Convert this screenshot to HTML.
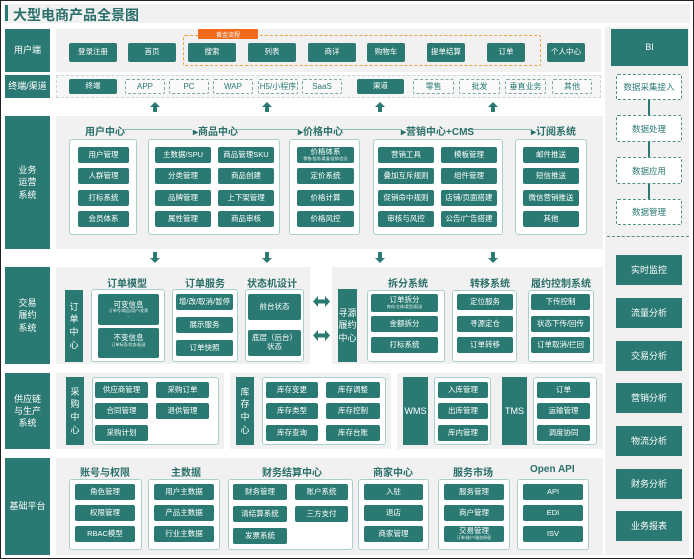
<!DOCTYPE html><html><head><meta charset="utf-8"><style>
*{margin:0;padding:0;box-sizing:border-box}
body{width:694px;height:560px;background:#fff;position:relative;overflow:hidden;font-family:"Liberation Sans","Noto Sans CJK SC",sans-serif}
div{position:absolute}
.frame{left:0;top:0;width:694px;height:559px;border:1.5px solid #222}
.g{background:#f1f1f1}
.b{background:#2a7a73;color:#fff;font-size:7.5px;display:flex;align-items:center;justify-content:center;text-align:center;border-radius:2px;line-height:1.15;flex-direction:column}
.d{border:1px dashed #7fa9a5;color:#2a7a73;font-size:8px;display:flex;align-items:center;justify-content:center;border-radius:2px;background:#fafafa}
.w{background:#fff;border:1px solid #a9d0cb;border-radius:3px}
.h{color:#2a6f69;font-size:10px;font-weight:bold;white-space:nowrap}
.L{background:#2a7a73;color:#fff;font-size:9px;display:flex;align-items:center;justify-content:center;text-align:center;line-height:1.35}
.v{background:#2a7a73;color:#fff;font-size:9px;display:flex;align-items:center;justify-content:center;text-align:center;line-height:1.4}
.s{font-size:4px;opacity:.9}
.au{width:0;height:0;border-left:5px solid transparent;border-right:5px solid transparent;border-bottom:5px solid #2a7a73}
.st{background:#2a7a73;width:4px}
.ln{height:1px;background:#8fbcb7}
.rd{border:1.2px dashed #4f8f89;background:#fff;color:#2a7a73;font-size:8.5px;display:flex;align-items:center;justify-content:center;border-radius:2px}
</style></head><body>
<div class="frame"></div>
<div class="g" style="left:4px;top:4px;width:686px;height:19px"></div>
<div style="left:5px;top:5px;width:3px;height:16px;background:#2a7a73"></div>
<div style="left:13px;top:5px;font-size:14px;font-weight:bold;color:#2a6f69">大型电商产品全景图</div>

<div class="L" style="left:5px;top:29px;width:45px;height:43px">用户端</div>
<div class="L" style="left:5px;top:75px;width:45px;height:23px">终端/渠道</div>
<div class="L" style="left:5px;top:116px;width:45px;height:133px">业务<br>运营<br>系统</div>
<div class="L" style="left:5px;top:267px;width:45px;height:97px">交易<br>履约<br>系统</div>
<div class="L" style="left:5px;top:373px;width:45px;height:76px">供应链<br>与生产<br>系统</div>
<div class="L" style="left:5px;top:458px;width:45px;height:97px">基础平台</div>

<div class="g" style="left:605px;top:27px;width:84px;height:528px"></div>
<div class="L" style="left:611px;top:29px;width:77px;height:37px">BI</div>
<div class="rd" style="left:616px;top:74px;width:66px;height:26px">数据采集接入</div>
<div class="rd" style="left:616px;top:115px;width:66px;height:27px">数据处理</div>
<div class="rd" style="left:616px;top:157px;width:66px;height:27px">数据应用</div>
<div class="rd" style="left:616px;top:199px;width:66px;height:26px">数据管理</div>
<div style="left:648px;top:100px;width:1.5px;height:15px;background:#2a7a73"></div>
<div style="left:648px;top:142px;width:1.5px;height:15px;background:#2a7a73"></div>
<div style="left:648px;top:184px;width:1.5px;height:15px;background:#2a7a73"></div>
<div style="left:607px;top:236px;width:82px;border-top:1px dashed #4f8f89"></div>
<div class="L" style="left:616px;top:255px;width:66px;height:30px">实时监控</div>
<div class="L" style="left:616px;top:298px;width:66px;height:30px">流量分析</div>
<div class="L" style="left:616px;top:341px;width:66px;height:30px">交易分析</div>
<div class="L" style="left:616px;top:383px;width:66px;height:30px">营销分析</div>
<div class="L" style="left:616px;top:426px;width:66px;height:30px">物流分析</div>
<div class="L" style="left:616px;top:469px;width:66px;height:30px">财务分析</div>
<div class="L" style="left:616px;top:511px;width:66px;height:30px">业务报表</div>

<div class="g" style="left:56px;top:29px;width:545px;height:43px"></div>
<div style="left:183px;top:35px;width:358px;height:31px;border:1px dashed #f0a24a;border-radius:2px"></div>
<div style="left:198px;top:29px;width:60px;height:10px;background:#f26b1d;color:#fff;font-size:6px;display:flex;align-items:center;justify-content:center;border-radius:1px">黄金流程</div>
<div class="b" style="left:69px;top:43px;width:48px;height:19px">登录注册</div>
<div class="b" style="left:128px;top:43px;width:48px;height:19px">首页</div>
<div class="b" style="left:188px;top:43px;width:48px;height:19px">搜索</div>
<div class="b" style="left:248px;top:43px;width:48px;height:19px">列表</div>
<div class="b" style="left:308px;top:43px;width:48px;height:19px">商详</div>
<div class="b" style="left:367px;top:43px;width:38px;height:19px">购物车</div>
<div class="b" style="left:427px;top:43px;width:38px;height:19px">提单结算</div>
<div class="b" style="left:487px;top:43px;width:38px;height:19px">订单</div>
<div class="b" style="left:547px;top:43px;width:38px;height:19px">个人中心</div>

<div style="left:56px;top:75px;width:545px;height:23px;border:1px dashed #c9d9d7;background:#f6f6f6"></div>
<div class="b" style="left:69px;top:79px;width:48px;height:15px">终端</div>
<div class="d" style="left:125px;top:79px;width:40px;height:15px">APP</div>
<div class="d" style="left:169px;top:79px;width:40px;height:15px">PC</div>
<div class="d" style="left:213px;top:79px;width:40px;height:15px">WAP</div>
<div class="d" style="left:258px;top:79px;width:40px;height:15px">H5/小程序</div>
<div class="d" style="left:302px;top:79px;width:40px;height:15px">SaaS</div>
<div class="b" style="left:357px;top:79px;width:47px;height:15px">渠道</div>
<div class="d" style="left:413px;top:79px;width:41px;height:15px">零售</div>
<div class="d" style="left:459px;top:79px;width:41px;height:15px">批发</div>
<div class="d" style="left:505px;top:79px;width:41px;height:15px">垂直业务</div>
<div class="d" style="left:552px;top:79px;width:40px;height:15px">其他</div>
<div class="au" style="left:150px;top:102px"></div><div class="st" style="left:153px;top:107px;height:5px"></div>
<div class="au" style="left:262px;top:102px"></div><div class="st" style="left:265px;top:107px;height:5px"></div>
<div class="au" style="left:375px;top:102px"></div><div class="st" style="left:378px;top:107px;height:5px"></div>
<div class="au" style="left:488px;top:102px"></div><div class="st" style="left:491px;top:107px;height:5px"></div>

<div class="g" style="left:56px;top:116px;width:547px;height:133px"></div>
<div class="ln" style="left:122px;top:129px;width:70px"></div>
<div class="ln" style="left:231px;top:129px;width:68px"></div>
<div class="ln" style="left:338px;top:129px;width:64px"></div>
<div class="ln" style="left:467px;top:129px;width:65px"></div>
<div class="h" style="left:85px;top:123px">用户中心</div>
<div class="h" style="left:193px;top:123px">▸商品中心</div>
<div class="h" style="left:298px;top:123px">▸价格中心</div>
<div class="h" style="left:401px;top:123px">▸营销中心+CMS</div>
<div class="h" style="left:531px;top:123px">▸订阅系统</div>
<div class="w" style="left:69px;top:139px;width:68px;height:96px"></div>
<div class="b" style="left:78px;top:147px;width:51px;height:16px">用户管理</div>
<div class="b" style="left:78px;top:168px;width:51px;height:16px">人群管理</div>
<div class="b" style="left:78px;top:190px;width:51px;height:16px">打标系统</div>
<div class="b" style="left:78px;top:211px;width:51px;height:16px">会员体系</div>
<div class="w" style="left:148px;top:139px;width:132px;height:96px"></div>
<div class="b" style="left:155px;top:147px;width:56px;height:16px">主数据/SPU</div>
<div class="b" style="left:218px;top:147px;width:56px;height:16px">商品管理SKU</div>
<div class="b" style="left:155px;top:168px;width:56px;height:16px">分类管理</div>
<div class="b" style="left:218px;top:168px;width:56px;height:16px">商品创建</div>
<div class="b" style="left:155px;top:190px;width:56px;height:16px">品牌管理</div>
<div class="b" style="left:218px;top:190px;width:56px;height:16px">上下架管理</div>
<div class="b" style="left:155px;top:211px;width:56px;height:16px">属性管理</div>
<div class="b" style="left:218px;top:211px;width:56px;height:16px">商品审核</div>
<div class="w" style="left:289px;top:139px;width:71px;height:96px"></div>
<div class="b" style="left:297px;top:147px;width:57px;height:16px">价格体系<span class="s">零售/批发/渠道/促销/会员</span></div>
<div class="b" style="left:297px;top:168px;width:57px;height:16px">定价系统</div>
<div class="b" style="left:297px;top:190px;width:57px;height:16px">价格计算</div>
<div class="b" style="left:297px;top:211px;width:57px;height:16px">价格风控</div>
<div class="w" style="left:373px;top:139px;width:130px;height:96px"></div>
<div class="b" style="left:378px;top:147px;width:56px;height:16px">营销工具</div>
<div class="b" style="left:441px;top:147px;width:56px;height:16px">模板管理</div>
<div class="b" style="left:378px;top:168px;width:56px;height:16px">叠加互斥规则</div>
<div class="b" style="left:441px;top:168px;width:56px;height:16px">组件管理</div>
<div class="b" style="left:378px;top:190px;width:56px;height:16px">促销命中规则</div>
<div class="b" style="left:441px;top:190px;width:56px;height:16px">店铺/页面搭建</div>
<div class="b" style="left:378px;top:211px;width:56px;height:16px">审核与风控</div>
<div class="b" style="left:441px;top:211px;width:56px;height:16px">公告/广告搭建</div>
<div class="w" style="left:515px;top:139px;width:72px;height:96px"></div>
<div class="b" style="left:523px;top:147px;width:56px;height:16px">邮件推送</div>
<div class="b" style="left:523px;top:168px;width:56px;height:16px">短信推送</div>
<div class="b" style="left:523px;top:190px;width:56px;height:16px">微信营销推送</div>
<div class="b" style="left:523px;top:211px;width:56px;height:16px">其他</div>
<div class="st" style="left:153px;top:252px;height:6px"></div><div style="left:150px;top:258px;border-left:5px solid transparent;border-right:5px solid transparent;border-top:5px solid #2a7a73"></div>
<div class="st" style="left:265px;top:252px;height:6px"></div><div style="left:262px;top:258px;border-left:5px solid transparent;border-right:5px solid transparent;border-top:5px solid #2a7a73"></div>
<div class="st" style="left:378px;top:252px;height:6px"></div><div style="left:375px;top:258px;border-left:5px solid transparent;border-right:5px solid transparent;border-top:5px solid #2a7a73"></div>
<div class="st" style="left:491px;top:252px;height:6px"></div><div style="left:488px;top:258px;border-left:5px solid transparent;border-right:5px solid transparent;border-top:5px solid #2a7a73"></div>

<div class="g" style="left:56px;top:267px;width:254px;height:97px"></div>
<div class="g" style="left:332px;top:267px;width:271px;height:97px"></div>
<div class="h" style="left:107px;top:275px">订单模型</div>
<div class="h" style="left:185px;top:275px">订单服务</div>
<div class="h" style="left:247px;top:275px">状态机设计</div>
<div class="v" style="left:65px;top:290px;width:18px;height:72px">订<br>单<br>中<br>心</div>
<div class="w" style="left:91px;top:289px;width:74px;height:73px"></div>
<div class="b" style="left:98px;top:294px;width:61px;height:31px">可变信息<span class="s">订单号/商品/用户/发票</span><span class="s">…</span></div>
<div class="b" style="left:98px;top:328px;width:61px;height:30px">不变信息<span class="s">订单标签/状态/配送</span><span class="s">…</span></div>
<div class="w" style="left:172px;top:289px;width:66px;height:73px"></div>
<div class="b" style="left:176px;top:294px;width:57px;height:16px">增/改/取消/暂停</div>
<div class="b" style="left:176px;top:317px;width:57px;height:16px">展示服务</div>
<div class="b" style="left:176px;top:340px;width:57px;height:16px">订单快照</div>
<div class="w" style="left:245px;top:289px;width:59px;height:73px"></div>
<div class="b" style="left:248px;top:294px;width:53px;height:26px">前台状态</div>
<div class="b" style="left:248px;top:330px;width:53px;height:26px">底层（后台）<br>状态</div>
<svg style="position:absolute;left:313px;top:296px" width="17" height="11" viewBox="0 0 17 11"><path d="M0 5.5L5 0V3.5H12V0L17 5.5L12 11V7.5H5V11Z" fill="#2a7a73"/></svg>
<svg style="position:absolute;left:313px;top:330px" width="17" height="11" viewBox="0 0 17 11"><path d="M0 5.5L5 0V3.5H12V0L17 5.5L12 11V7.5H5V11Z" fill="#2a7a73"/></svg>
<div class="h" style="left:388px;top:275px">拆分系统</div>
<div class="h" style="left:470px;top:275px">转移系统</div>
<div class="h" style="left:531px;top:275px">履约控制系统</div>
<div class="v" style="left:338px;top:289px;width:19px;height:73px">寻源<br>履约<br>中心</div>
<div class="w" style="left:367px;top:290px;width:78px;height:72px"></div>
<div class="b" style="left:371px;top:294px;width:67px;height:18px">订单拆分<span class="s">库存/主体/类型/配送</span></div>
<div class="b" style="left:371px;top:316px;width:67px;height:16px">金额拆分</div>
<div class="b" style="left:371px;top:337px;width:67px;height:16px">打标系统</div>
<div class="w" style="left:452px;top:290px;width:65px;height:72px"></div>
<div class="b" style="left:457px;top:294px;width:56px;height:16px">定位服务</div>
<div class="b" style="left:457px;top:316px;width:56px;height:16px">寻源定仓</div>
<div class="b" style="left:457px;top:337px;width:56px;height:16px">订单转移</div>
<div class="w" style="left:528px;top:290px;width:66px;height:72px"></div>
<div class="b" style="left:531px;top:294px;width:59px;height:16px">下传控制</div>
<div class="b" style="left:531px;top:316px;width:59px;height:16px">状态下传/回传</div>
<div class="b" style="left:531px;top:337px;width:59px;height:16px">订单取消/拦回</div>

<div class="g" style="left:56px;top:373px;width:168px;height:76px"></div>
<div class="v" style="left:66px;top:377px;width:18px;height:68px">采<br>购<br>中<br>心</div>
<div class="w" style="left:92px;top:377px;width:127px;height:68px"></div>
<div class="b" style="left:95px;top:382px;width:53px;height:16px">供应商管理</div>
<div class="b" style="left:156px;top:382px;width:53px;height:16px">采购订单</div>
<div class="b" style="left:95px;top:403px;width:53px;height:16px">合同管理</div>
<div class="b" style="left:156px;top:403px;width:53px;height:16px">退供管理</div>
<div class="b" style="left:95px;top:425px;width:53px;height:16px">采购计划</div>
<div class="g" style="left:230px;top:373px;width:161px;height:76px"></div>
<div class="v" style="left:236px;top:377px;width:18px;height:68px">库<br>存<br>中<br>心</div>
<div class="w" style="left:262px;top:377px;width:124px;height:68px"></div>
<div class="b" style="left:266px;top:382px;width:52px;height:16px">库存变更</div>
<div class="b" style="left:326px;top:382px;width:54px;height:16px">库存调整</div>
<div class="b" style="left:266px;top:403px;width:52px;height:16px">库存类型</div>
<div class="b" style="left:326px;top:403px;width:54px;height:16px">库存控制</div>
<div class="b" style="left:266px;top:425px;width:52px;height:16px">库存查询</div>
<div class="b" style="left:326px;top:425px;width:54px;height:16px">库存台账</div>
<div class="g" style="left:397px;top:373px;width:206px;height:76px"></div>
<div class="v" style="left:403px;top:377px;width:25px;height:68px">WMS</div>
<div class="w" style="left:434px;top:377px;width:57px;height:68px"></div>
<div class="b" style="left:438px;top:382px;width:50px;height:16px">入库管理</div>
<div class="b" style="left:438px;top:403px;width:50px;height:16px">出库管理</div>
<div class="b" style="left:438px;top:425px;width:50px;height:16px">库内管理</div>
<div class="v" style="left:502px;top:377px;width:25px;height:68px">TMS</div>
<div class="w" style="left:533px;top:377px;width:64px;height:68px"></div>
<div class="b" style="left:537px;top:382px;width:53px;height:16px">订单</div>
<div class="b" style="left:537px;top:403px;width:53px;height:16px">运输管理</div>
<div class="b" style="left:537px;top:425px;width:53px;height:16px">调度协同</div>

<div class="g" style="left:56px;top:458px;width:547px;height:97px"></div>
<div class="h" style="left:80px;top:464px">账号与权限</div>
<div class="h" style="left:171px;top:464px">主数据</div>
<div class="h" style="left:262px;top:464px">财务结算中心</div>
<div class="h" style="left:373px;top:464px">商家中心</div>
<div class="h" style="left:453px;top:464px">服务市场</div>
<div class="h" style="left:530px;top:464px">Open API</div>
<div class="w" style="left:69px;top:479px;width:73px;height:71px"></div>
<div class="b" style="left:75px;top:484px;width:60px;height:16px">角色管理</div>
<div class="b" style="left:75px;top:505px;width:60px;height:16px">权限管理</div>
<div class="b" style="left:75px;top:526px;width:60px;height:16px">RBAC模型</div>
<div class="w" style="left:148px;top:479px;width:72px;height:71px"></div>
<div class="b" style="left:154px;top:484px;width:60px;height:16px">用户主数据</div>
<div class="b" style="left:154px;top:505px;width:60px;height:16px">产品主数据</div>
<div class="b" style="left:154px;top:526px;width:60px;height:16px">行业主数据</div>
<div class="w" style="left:228px;top:479px;width:125px;height:71px"></div>
<div class="b" style="left:233px;top:484px;width:54px;height:16px">财务管理</div>
<div class="b" style="left:295px;top:484px;width:53px;height:16px">账户系统</div>
<div class="b" style="left:233px;top:506px;width:54px;height:16px">清结算系统</div>
<div class="b" style="left:295px;top:506px;width:53px;height:16px">三方支付</div>
<div class="b" style="left:233px;top:528px;width:54px;height:16px">发票系统</div>
<div class="w" style="left:358px;top:479px;width:71px;height:71px"></div>
<div class="b" style="left:364px;top:484px;width:59px;height:16px">入驻</div>
<div class="b" style="left:364px;top:505px;width:59px;height:16px">退店</div>
<div class="b" style="left:364px;top:526px;width:59px;height:16px">商家管理</div>
<div class="w" style="left:438px;top:479px;width:72px;height:71px"></div>
<div class="b" style="left:444px;top:484px;width:60px;height:16px">服务管理</div>
<div class="b" style="left:444px;top:505px;width:60px;height:16px">商户管理</div>
<div class="b" style="left:444px;top:526px;width:60px;height:16px">交易管理<span class="s">订单/账户/服务授权</span></div>
<div class="w" style="left:517px;top:479px;width:72px;height:71px"></div>
<div class="b" style="left:523px;top:484px;width:60px;height:16px">API</div>
<div class="b" style="left:523px;top:505px;width:60px;height:16px">EDI</div>
<div class="b" style="left:523px;top:526px;width:60px;height:16px">ISV</div>
</body></html>
